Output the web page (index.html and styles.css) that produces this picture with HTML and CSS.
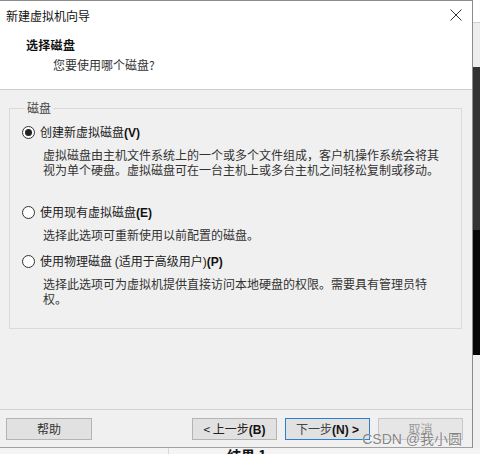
FILE: index.html
```html
<!DOCTYPE html>
<html lang="zh-CN">
<head>
<meta charset="utf-8">
<title>新建虚拟机向导</title>
<link rel="stylesheet" href="styles.css">
</head>
<body>
<div class="dialog">
  <header class="head">
    <div class="titlebar">
      <span class="title">新建虚拟机向导</span>
      <svg class="close" width="12" height="12" viewBox="0 0 12 12" aria-hidden="true">
        <path d="M0.5 0.5 L11.5 11.5 M11.5 0.5 L0.5 11.5" stroke="#333" stroke-width="1" fill="none"/>
      </svg>
    </div>
    <div class="heading">
      <div class="h-title">选择磁盘</div>
      <div class="h-sub">您要使用哪个磁盘?</div>
    </div>
  </header>
  <main class="body">
    <fieldset class="group">
      <legend>磁盘</legend>
      <div class="option opt-create">
        <label class="row"><input type="radio" name="disk" checked><span>创建新虚拟磁盘<b class="key">(V)</b></span></label>
        <p class="desc">虚拟磁盘由主机文件系统上的一个或多个文件组成，客户机操作系统会将其<br>视为单个硬盘。虚拟磁盘可在一台主机上或多台主机之间轻松复制或移动。</p>
      </div>
      <div class="option opt-existing">
        <label class="row"><input type="radio" name="disk"><span>使用现有虚拟磁盘<b class="key">(E)</b></span></label>
        <p class="desc">选择此选项可重新使用以前配置的磁盘。</p>
      </div>
      <div class="option">
        <label class="row"><input type="radio" name="disk"><span>使用物理磁盘 <span class="lat">(</span>适用于高级用户<span class="lat">)</span><b class="key">(P)</b></span></label>
        <p class="desc">选择此选项可为虚拟机提供直接访问本地硬盘的权限。需要具有管理员特<br>权。</p>
      </div>
    </fieldset>
  </main>
  <footer class="foot">
    <button class="btn">帮助</button>
    <button class="btn btn-back">&lt; 上一步<b class="key">(B)</b></button>
    <button class="btn btn-next">下一步<b class="key">(N) &gt;</b></button>
    <button class="btn btn-off">取消</button>
    <span class="mark">CSDN @我小圆</span>
  </footer>
</div>
<div class="below"><div class="below-in"><span class="res">结果 1</span></div></div>
</body>
</html>
```
FILE: styles.css
```css
html, body {
  margin: 0;
  padding: 0;
}
body {
  width: 480px;
  height: 454px;
  overflow: hidden;
  font-family: "Noto Sans CJK SC", "Liberation Sans", sans-serif;
  font-size: 12px;
  color: #222;
  background: linear-gradient(to bottom,
    #ffffff 0, #ffffff 22px,
    #cfcfcf 22px, #cfcfcf 23px,
    #ededed 23px, #ededed 67px,
    #333333 67px, #333333 230px,
    #060606 230px, #060606 355px,
    #f0f0f0 355px);
}
.dialog {
  width: 473px;
  box-sizing: border-box;
  border-top: 1px solid #8c8c8c;
  border-right: 1px solid #8c8c8c;
  border-bottom: 1px solid #a0a0a0;
  background: #f0f0f0;
}
.head {
  background: #fff;
  border-bottom: 1px solid #cdcdcd;
  padding-bottom: 15px;
}
.titlebar {
  height: 29px;
  display: flex;
  align-items: center;
  justify-content: space-between;
  padding: 0 10px 0 6px;
}
.title {
  font-size: 12px;
  line-height: 29px;
  color: #111;
}
.close {
  display: block;
  margin-top: -1px;
}
.heading {
  padding-top: 6px;
}
.h-title {
  padding-left: 26px;
  font-weight: bold;
  line-height: 18px;
  color: #111;
  letter-spacing: 0.3px;
}
.h-sub {
  margin-top: 2px;
  padding-left: 53px;
  line-height: 18px;
  color: #333;
}
.body {
  padding: 10px 10px 80px 9px;
}
.group {
  margin: 0;
  padding: 8px 10px 22px 12px;
  border: 1px solid #dadada;
  min-width: 0;
}
.group legend {
  padding: 0 2px;
  margin-left: 3px;
  line-height: 16px;
  color: #444;
}
.option {
  margin: 0;
}
.opt-create {
  margin-bottom: 27px;
}
.opt-existing {
  margin-bottom: 11px;
}
.row {
  display: flex;
  align-items: center;
  height: 16px;
  line-height: 16px;
  color: #222;
}
.row input {
  appearance: none;
  -webkit-appearance: none;
  margin: 0 5px 0 0;
  width: 13px;
  height: 13px;
  border: 1px solid #333;
  border-radius: 50%;
  background: #fff;
  box-sizing: border-box;
  display: grid;
  place-items: center;
}
.row input:checked::after {
  content: "";
  width: 7px;
  height: 7px;
  border-radius: 50%;
  background: #222;
}
.key {
  font-family: "Liberation Sans", sans-serif;
  font-weight: bold;
  font-size: 12px;
  color: #111;
}
.lat {
  font-family: "Liberation Sans", sans-serif;
}
.desc {
  margin: 7px 0 0 21px;
  line-height: 15px;
  color: #333;
}
.foot {
  position: relative;
  display: flex;
  align-items: center;
  gap: 8px;
  border-top: 1px solid #d4d4d4;
  padding: 8px 9px 7px 6px;
}
.btn {
  height: 22px;
  width: 86px;
  box-sizing: border-box;
  margin: 0;
  padding: 0;
  border: 1px solid #b4b4b4;
  background: #e1e1e1;
  font-family: "Noto Sans CJK SC", "Liberation Sans", sans-serif;
  font-size: 12px;
  color: #333;
  line-height: 20px;
}
.btn-back {
  margin-left: auto;
  width: 85px;
  color: #222;
}
.btn-next {
  width: 85px;
  border-color: #2a7fd0;
  color: #444;
}
.btn-off {
  width: 85px;
  border-color: #c8c8c8;
  background: #e6e6e6;
  color: #9a9a9a;
}
.mark {
  position: absolute;
  right: 10px;
  top: 21px;
  font-family: "Liberation Sans", "Noto Sans CJK SC", sans-serif;
  font-size: 14px;
  line-height: 16px;
  color: rgba(110, 110, 110, 0.85);
  text-shadow: 0 0 1px #fff;
  pointer-events: none;
}
.below {
  height: 6px;
  overflow: hidden;
  padding-left: 168px;
  background: #f4f4f4;
}
.below-in {
  height: 6px;
  border-left: 1px solid #d8d8d8;
  padding-left: 58px;
}
.res {
  display: block;
  font-weight: bold;
  font-size: 14px;
  line-height: 14px;
  color: #111;
}
```
